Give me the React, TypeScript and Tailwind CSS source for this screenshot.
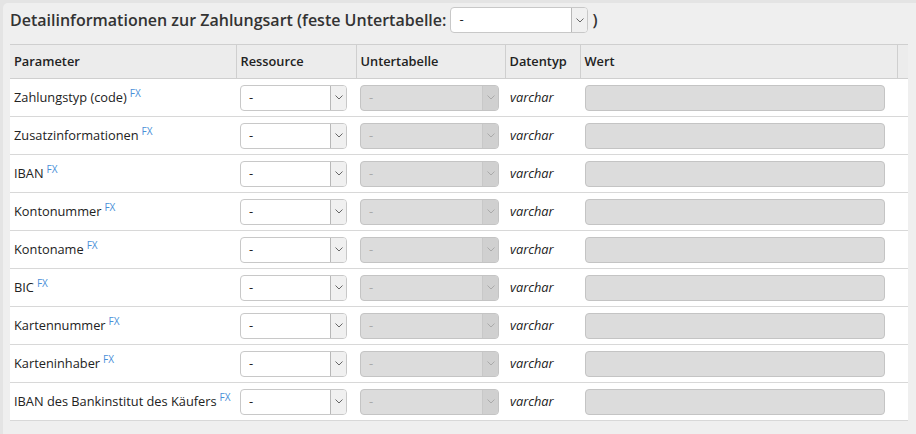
import React from "react";

const rows = [
  "Zahlungstyp (code)",
  "Zusatzinformationen",
  "IBAN",
  "Kontonummer",
  "Kontoname",
  "BIC",
  "Kartennummer",
  "Karteninhaber",
  "IBAN des Bankinstitut des Käufers",
];

function Chevron({ className }: { className?: string }) {
  return (
    <svg width="8" height="5" viewBox="0 0 8 5" className={className}>
      <path d="M0.5 0.5 L4 4 L7.5 0.5" fill="none" stroke="currentColor" strokeWidth="1" />
    </svg>
  );
}

function Select({ width, disabled = false }: { width: string; disabled?: boolean }) {
  return (
    <div
      className={`flex h-[26px] ${width} items-stretch rounded-[4px] border ${
        disabled ? "border-[#c4c4c4] bg-[#dcdcdc]" : "border-[#c8c8c8] bg-white"
      }`}
    >
      <span
        className={`flex flex-1 items-center pl-[8px] text-[13px] ${
          disabled ? "text-[#aaa]" : "text-[#222]"
        }`}
      >
        -
      </span>
      <span
        className={`flex w-[16px] items-center justify-center border-l rounded-r-[3px] ${
          disabled
            ? "border-[#c8c8c8] bg-[#d0d0d0] text-[#aaa]"
            : "border-[#b8b8b8] bg-[#f0f0f0] text-[#666]"
        }`}
      >
        <Chevron />
      </span>
    </div>
  );
}

export default function App() {
  return (
    <div
      className="h-[434px] w-[916px] overflow-hidden bg-[#e4e4e4] pl-[3px] pt-[3px]"
      style={{ fontFamily: '"Open Sans", "Liberation Sans", sans-serif' }}
    >
      <div className="h-full rounded-tl-[5px] bg-[#efefef] pl-[7px] pr-[8px]">
        <div className="flex h-[41px] items-center gap-[4px] pb-[7px]">
          <span className="text-[16px] font-semibold text-[#333]">
            Detailinformationen zur Zahlungsart (feste Untertabelle:
          </span>
          <Select width="w-[138px]" />
          <span className="text-[16px] font-semibold text-[#333]">)</span>
        </div>
        <table className="w-[898px] border-collapse text-[12.8px] text-[#222]">
          <thead>
            <tr className="h-[34px] border-t border-b border-[#cfcfcf] bg-[#ececec] text-left font-semibold">
              <th className="w-[226px] border-r border-[#cfcfcf] pl-[4px] font-semibold">Parameter</th>
              <th className="w-[120px] border-r border-[#cfcfcf] pl-[4px] font-semibold">Ressource</th>
              <th className="w-[149px] border-r border-[#cfcfcf] pl-[4px] font-semibold">Untertabelle</th>
              <th className="w-[75px] border-r border-[#cfcfcf] pl-[4px] font-semibold">Datentyp</th>
              <th className="w-[317px] border-r border-[#cfcfcf] pl-[4px] font-semibold">Wert</th>
              <th />
            </tr>
          </thead>
          <tbody>
            {rows.map((r) => (
              <tr key={r} className="h-[38px] border-b border-[#d8d8d8] bg-white">
                <td className="pl-[4px] align-middle">
                  {r}
                  <sup className="ml-[3px] text-[10px] text-[#4a8fd8]">FX</sup>
                </td>
                <td className="pl-[4px]">
                  <Select width="w-[107px]" />
                </td>
                <td className="pl-[4px]">
                  <Select width="w-[139px]" disabled />
                </td>
                <td className="pl-[5px] italic">varchar</td>
                <td className="pl-[5px]">
                  <div className="h-[26px] w-[300px] rounded-[4px] border border-[#c4c4c4] bg-[#dcdcdc]" />
                </td>
                <td />
              </tr>
            ))}
          </tbody>
        </table>
      </div>
    </div>
  );
}
